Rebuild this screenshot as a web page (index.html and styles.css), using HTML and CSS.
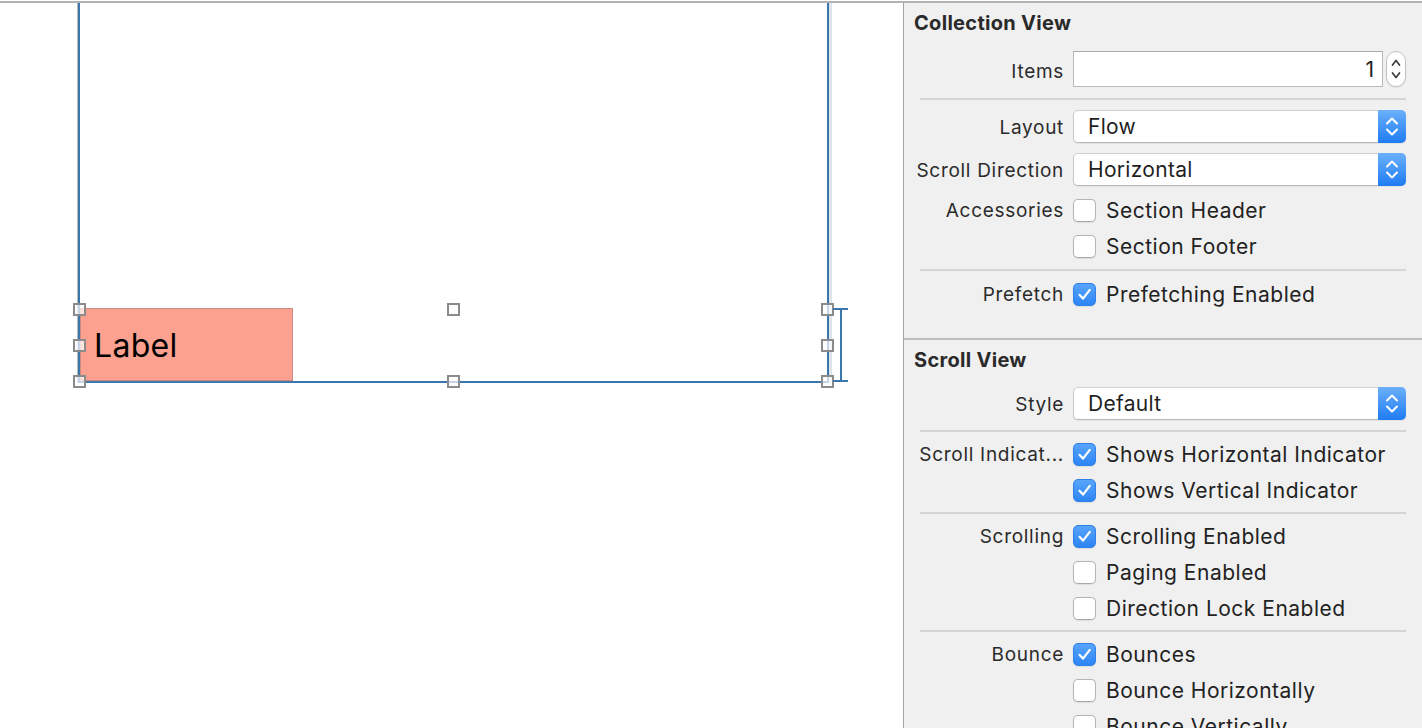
FILE: index.html
```html
<!DOCTYPE html>
<html>
<head>
<meta charset="utf-8">
<title>Collection View Inspector</title>
<link rel="stylesheet" href="styles.css">
</head>
<body>
<div class="app">
  <div class="topline"></div>
  <div class="main">
    <div class="canvas">
      <div class="cv">
        <div class="cell-label">Label</div>
      </div>
      <div class="sel">
        <span class="h h-tl"></span><span class="h h-tm"></span><span class="h h-tr"></span>
        <span class="h h-ml"></span><span class="h h-mr"></span>
        <span class="h h-bl"></span><span class="h h-bm"></span><span class="h h-br"></span>
      </div>
      <div class="bracket"></div>
    </div>

    <aside class="inspector">
      <div class="hdr">Collection View</div>

      <div class="row r-items">
        <div class="lbl lbl-low">Items</div>
        <div class="ctl">
          <div class="textfield">1</div>
          <div class="stepper">
            <svg width="20" height="36" viewBox="0 0 20 36"><path d="M6.5 14 L10 9.5 L13.5 14" /><path d="M6.5 22 L10 26.5 L13.5 22" /></svg>
          </div>
        </div>
      </div>
      <div class="sep sep-a"></div>

      <div class="row r-popup r-layout">
        <div class="lbl">Layout</div>
        <div class="ctl popup"><span class="val">Flow</span><span class="arrow"><svg width="28" height="33" viewBox="0 0 28 33"><path d="M9 13.5 L14 8.5 L19 13.5" /><path d="M9 19.5 L14 24.5 L19 19.5" /></svg></span></div>
      </div>
      <div class="row r-popup r-dir">
        <div class="lbl">Scroll Direction</div>
        <div class="ctl popup"><span class="val">Horizontal</span><span class="arrow"><svg width="28" height="33" viewBox="0 0 28 33"><path d="M9 13.5 L14 8.5 L19 13.5" /><path d="M9 19.5 L14 24.5 L19 19.5" /></svg></span></div>
      </div>

      <div class="row r-check r-acc">
        <div class="lbl">Accessories</div>
        <div class="ctl"><span class="cb"></span><span class="txt">Section Header</span></div>
      </div>
      <div class="row r-check">
        <div class="lbl"></div>
        <div class="ctl"><span class="cb"></span><span class="txt">Section Footer</span></div>
      </div>
      <div class="sep sep-b"></div>
      <div class="row r-check">
        <div class="lbl">Prefetch</div>
        <div class="ctl"><span class="cb on"><svg width="23" height="23" viewBox="0 0 23 23"><path d="M6.5 11.8 L10 15.6 L16.8 6.8" /></svg></span><span class="txt">Prefetching Enabled</span></div>
      </div>

      <div class="section-line"></div>

      <div class="hdr hdr2">Scroll View</div>
      <div class="row r-popup r-style">
        <div class="lbl">Style</div>
        <div class="ctl popup"><span class="val">Default</span><span class="arrow"><svg width="28" height="33" viewBox="0 0 28 33"><path d="M9 13.5 L14 8.5 L19 13.5" /><path d="M9 19.5 L14 24.5 L19 19.5" /></svg></span></div>
      </div>
      <div class="sep sep-c"></div>
      <div class="row r-check">
        <div class="lbl">Scroll Indicat...</div>
        <div class="ctl"><span class="cb on"><svg width="23" height="23" viewBox="0 0 23 23"><path d="M6.5 11.8 L10 15.6 L16.8 6.8" /></svg></span><span class="txt">Shows Horizontal Indicator</span></div>
      </div>
      <div class="row r-check">
        <div class="lbl"></div>
        <div class="ctl"><span class="cb on"><svg width="23" height="23" viewBox="0 0 23 23"><path d="M6.5 11.8 L10 15.6 L16.8 6.8" /></svg></span><span class="txt">Shows Vertical Indicator</span></div>
      </div>
      <div class="sep sep-d"></div>
      <div class="row r-check">
        <div class="lbl">Scrolling</div>
        <div class="ctl"><span class="cb on"><svg width="23" height="23" viewBox="0 0 23 23"><path d="M6.5 11.8 L10 15.6 L16.8 6.8" /></svg></span><span class="txt">Scrolling Enabled</span></div>
      </div>
      <div class="row r-check">
        <div class="lbl"></div>
        <div class="ctl"><span class="cb"></span><span class="txt">Paging Enabled</span></div>
      </div>
      <div class="row r-check">
        <div class="lbl"></div>
        <div class="ctl"><span class="cb"></span><span class="txt">Direction Lock Enabled</span></div>
      </div>
      <div class="sep sep-d"></div>
      <div class="row r-check">
        <div class="lbl">Bounce</div>
        <div class="ctl"><span class="cb on"><svg width="23" height="23" viewBox="0 0 23 23"><path d="M6.5 11.8 L10 15.6 L16.8 6.8" /></svg></span><span class="txt">Bounces</span></div>
      </div>
      <div class="row r-check">
        <div class="lbl"></div>
        <div class="ctl"><span class="cb"></span><span class="txt">Bounce Horizontally</span></div>
      </div>
      <div class="row r-check">
        <div class="lbl"></div>
        <div class="ctl"><span class="cb"></span><span class="txt">Bounce Vertically</span></div>
      </div>
    </aside>
  </div>
</div>
</body>
</html>
```

FILE: styles.css
```css
* { box-sizing: border-box; }

html, body {
  margin: 0;
  padding: 0;
  width: 1422px;
  height: 728px;
  overflow: hidden;
  background: #ffffff;
  font-family: "Inter", "Liberation Sans", sans-serif;
  color: #262626;
}

.app {
  display: flex;
  flex-direction: column;
  height: 728px;
}

.topline {
  margin-top: 1px;
  height: 2px;
  background: #b3b3b3;
  flex: none;
}

.main {
  flex: 1;
  display: flex;
  min-height: 0;
}

/* ---------- canvas ---------- */
.canvas {
  flex: 0 0 903px;
  position: relative;
  background: #ffffff;
  overflow: hidden;
}

.cv {
  position: absolute;
  left: 78px;
  top: -30px;
  width: 751px;
  height: 410px;
  border: 2px solid #3b77ad;
  border-top: none;
  box-shadow: -1px 0 0 0 #b9b9b9, 3px 0 0 0 #dde5ec;
  display: flex;
  flex-direction: column;
  justify-content: flex-end;
}

.cell-label {
  width: 213px;
  height: 73px;
  background: #fca18f;
  border: 1px solid #cc8c7f;
  display: flex;
  align-items: center;
  padding-left: 13px;
  padding-top: 2px;
  font-size: 32px;
  letter-spacing: 0.3px;
  color: #000;
}

.sel {
  position: absolute;
  left: 79px;
  top: 306px;
  width: 748px;
  height: 72px;
}

.h {
  position: absolute;
  width: 13px;
  height: 13px;
  margin: -6.5px 0 0 -6.5px;
  border: 2px solid #8b8b8b;
  background: rgba(255, 255, 255, 0.7);
}
.h-tl { left: 0; top: 0; }
.h-tm { left: 50%; top: 0; }
.h-tr { left: 100%; top: 0; }
.h-ml { left: 0; top: 50%; }
.h-mr { left: 100%; top: 50%; }
.h-bl { left: 0; top: 100%; }
.h-bm { left: 50%; top: 100%; }
.h-br { left: 100%; top: 100%; }

.bracket {
  position: absolute;
  left: 833px;
  top: 305px;
  width: 15px;
  height: 74px;
  border-top: 2px solid #3b77ad;
  border-bottom: 2px solid #3b77ad;
}
.bracket::before {
  content: "";
  position: absolute;
  left: 7px;
  top: 0;
  bottom: 0;
  width: 2px;
  background: #3b77ad;
}

/* ---------- inspector ---------- */
.inspector {
  flex: 1;
  background: #f0f0f0;
  border-left: 1px solid #a3a3a3;
  display: flex;
  flex-direction: column;
  min-width: 0;
}

.hdr {
  height: 37px;
  line-height: 37px;
  padding-top: 2px;
  padding-left: 10px;
  font-size: 20px;
  font-weight: 700;
  letter-spacing: 0.3px;
  color: #2a2a2a;
  flex: none;
}
.hdr2 {
  height: 36px;
  line-height: 35px;
  padding-top: 3px;
}

.row {
  display: flex;
  align-items: center;
  height: 36px;
  flex: none;
}

.lbl {
  width: 160px;
  flex: none;
  text-align: right;
  font-size: 19px;
  letter-spacing: 0.7px;
  color: #2b2b2b;
  white-space: nowrap;
}
.lbl-low { padding-top: 4px; }
.r-popup .lbl { padding-top: 2px; }

.ctl {
  margin-left: 9px;
  width: 333px;
  flex: none;
  display: flex;
  align-items: center;
}

.r-items { margin-top: 11px; }
.r-popup { height: 33px; }
.r-layout { margin-top: 10px; }
.r-dir { margin-top: 10px; }
.r-acc { margin-top: 6px; }
.r-style { margin-top: 11px; }

/* separators */
.sep {
  height: 2px;
  margin-left: 16px;
  width: 486px;
  background: #d5d5d5;
  flex: none;
}
.sep-a { margin-top: 11px; }
.sep-b { margin-top: 5px; margin-bottom: 5px; }
.sep-c { margin-top: 10px; margin-bottom: 4px; }
.sep-d { margin-top: 4px; margin-bottom: 4px; }

.section-line {
  margin-top: 26px;
  height: 2px;
  background: #bdbdbd;
  flex: none;
}

/* text field + stepper */
.textfield {
  width: 310px;
  height: 36px;
  background: #fff;
  border: 1px solid #b9b9b9;
  border-top-color: #a9a9a9;
  text-align: right;
  padding-right: 8px;
  padding-top: 3px;
  font-size: 21px;
  line-height: 30px;
  color: #1f1f1f;
}

.stepper {
  margin-left: 3px;
  width: 20px;
  height: 36px;
  border: 1px solid #c3c3c3;
  border-radius: 10px;
  background: #fff;
  box-shadow: 0 1px 1px rgba(0, 0, 0, 0.08);
  display: flex;
  align-items: center;
  justify-content: center;
  overflow: hidden;
}
.stepper svg {
  flex: none;
  display: block;
}
.stepper path {
  fill: none;
  stroke: #3c3c3c;
  stroke-width: 1.7;
  stroke-linecap: round;
  stroke-linejoin: round;
}

/* popup button */
.popup {
  height: 33px;
  background: #fff;
  border: 1px solid #c8c8c8;
  border-top-color: #d0d0d0;
  border-bottom-color: #b8b8b8;
  border-radius: 5px;
  box-shadow: 0 1px 1px rgba(0, 0, 0, 0.06);
  align-items: stretch;
}
.popup .val {
  flex: 1;
  padding-left: 14px;
  padding-top: 1px;
  font-size: 21px;
  letter-spacing: 0.3px;
  line-height: 30px;
  color: #1f1f1f;
}
.popup .arrow {
  width: 28px;
  margin: -1px -1px -1px 0;
  border-radius: 0 5px 5px 0;
  background: linear-gradient(#6bb0fb, #1f7cf2);
  display: flex;
  align-items: center;
  justify-content: center;
}
.popup .arrow svg { display: block; }
.popup .arrow path {
  fill: none;
  stroke: #ffffff;
  stroke-width: 2;
  stroke-linecap: round;
  stroke-linejoin: round;
}

/* checkboxes */
.cb {
  width: 23px;
  height: 23px;
  flex: none;
  border: 1px solid #b5b5b5;
  border-bottom-color: #a8a8a8;
  border-radius: 5px;
  background: #fff;
  box-shadow: 0 0.5px 1px rgba(0, 0, 0, 0.08);
  display: flex;
  align-items: center;
  justify-content: center;
}
.cb.on {
  border-color: #2f80eb;
  background: linear-gradient(#58a4fa, #2d85f4);
}
.cb svg { display: block; margin: -1px; }
.cb path {
  fill: none;
  stroke: #ffffff;
  stroke-width: 2.2;
  stroke-linecap: round;
  stroke-linejoin: round;
}

.txt {
  margin-left: 10px;
  font-size: 21px;
  letter-spacing: 0.5px;
  color: #222;
  white-space: nowrap;
}
```
